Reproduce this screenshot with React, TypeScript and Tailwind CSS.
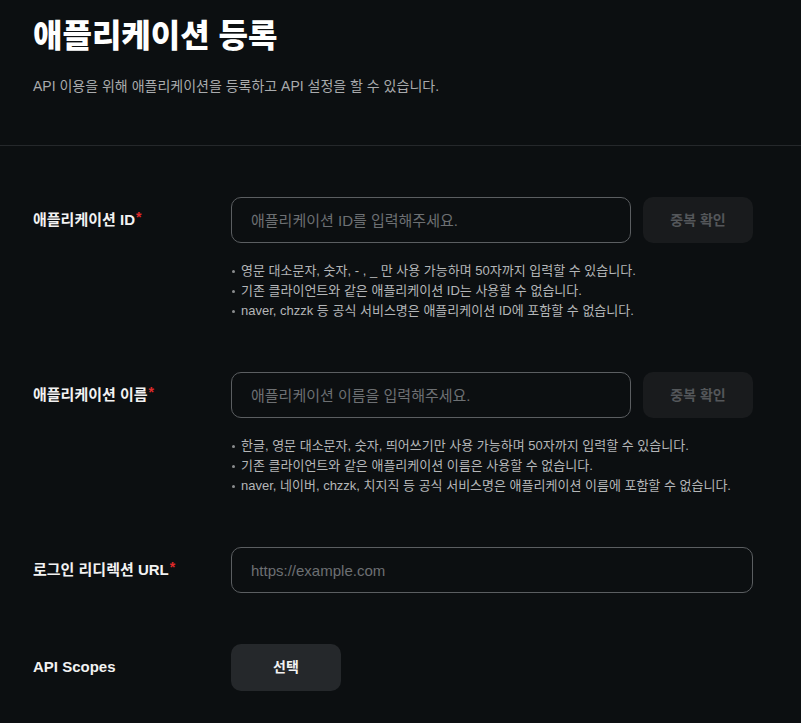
import React from "react";

const font = { fontFamily: '"Liberation Sans", "Noto Sans CJK KR", sans-serif' };

function Label({ text, required }: { text: string; required?: boolean }) {
  return (
    <div className="w-[198px] shrink-0 flex items-center h-[46px] text-[15px] font-bold text-[#f2f2f2]">
      <span>{text}</span>
      {required && <span className="text-[#e02a2a] self-start mt-[10px] ml-[1px] text-[14px]">*</span>}
    </div>
  );
}

function Help({ lines }: { lines: string[] }) {
  return (
    <ul className="mt-[18px] flex flex-col">
      {lines.map((l, i) => (
        <li key={i} className="flex items-center text-[13px] leading-[20px] text-[#b4b6b8]">
          <span className="w-[3px] h-[3px] rounded-full bg-[#8a8c8e] ml-[1px] mr-[6px]" />
          <span>{l}</span>
        </li>
      ))}
    </ul>
  );
}

function Input({ placeholder }: { placeholder: string }) {
  return (
    <input
      placeholder={placeholder}
      className="flex-1 h-[46px] rounded-[10px] border border-[#5b5e61] bg-transparent px-[19px] text-[15px] text-white placeholder:text-[#6d7073] outline-none"
      style={font}
    />
  );
}

function DupButton() {
  return (
    <button className="w-[110px] h-[46px] ml-[12px] rounded-[10px] bg-[#191b1d] text-[14px] font-bold text-[#54575a]" style={font}>
      중복 확인
    </button>
  );
}

export default function App() {
  return (
    <div className="min-h-[723px] w-full bg-[#0c0f11]" style={font}>
      <div className="px-[33px] pt-[16px] pb-[50px] border-b border-[#25282b]">
        <h1 className="text-[32px] leading-[40px] font-black text-white">애플리케이션 등록</h1>
        <p className="mt-[21px] text-[14px] leading-[18px] text-[#a9abad]">
          API 이용을 위해 애플리케이션을 등록하고 API 설정을 할 수 있습니다.
        </p>
      </div>
      <div className="px-[33px] pt-[51px] w-[786px] flex flex-col gap-[51px]">
        <div className="flex">
          <Label text="애플리케이션 ID" required />
          <div className="flex-1 flex flex-col">
            <div className="flex">
              <Input placeholder="애플리케이션 ID를 입력해주세요." />
              <DupButton />
            </div>
            <Help
              lines={[
                "영문 대소문자, 숫자, - , _ 만 사용 가능하며 50자까지 입력할 수 있습니다.",
                "기존 클라이언트와 같은 애플리케이션 ID는 사용할 수 없습니다.",
                "naver, chzzk 등 공식 서비스명은 애플리케이션 ID에 포함할 수 없습니다.",
              ]}
            />
          </div>
        </div>
        <div className="flex">
          <Label text="애플리케이션 이름" required />
          <div className="flex-1 flex flex-col">
            <div className="flex">
              <Input placeholder="애플리케이션 이름을 입력해주세요." />
              <DupButton />
            </div>
            <Help
              lines={[
                "한글, 영문 대소문자, 숫자, 띄어쓰기만 사용 가능하며 50자까지 입력할 수 있습니다.",
                "기존 클라이언트와 같은 애플리케이션 이름은 사용할 수 없습니다.",
                "naver, 네이버, chzzk, 치지직 등 공식 서비스명은 애플리케이션 이름에 포함할 수 없습니다.",
              ]}
            />
          </div>
        </div>
        <div className="flex">
          <Label text="로그인 리디렉션 URL" required />
          <div className="flex-1 flex">
            <Input placeholder="https://example.com" />
          </div>
        </div>
        <div className="flex">
          <Label text="API Scopes" />
          <button className="w-[110px] h-[47px] rounded-[10px] bg-[#25282b] text-[14px] font-bold text-[#f2f2f2]" style={font}>
            선택
          </button>
        </div>
      </div>
    </div>
  );
}
